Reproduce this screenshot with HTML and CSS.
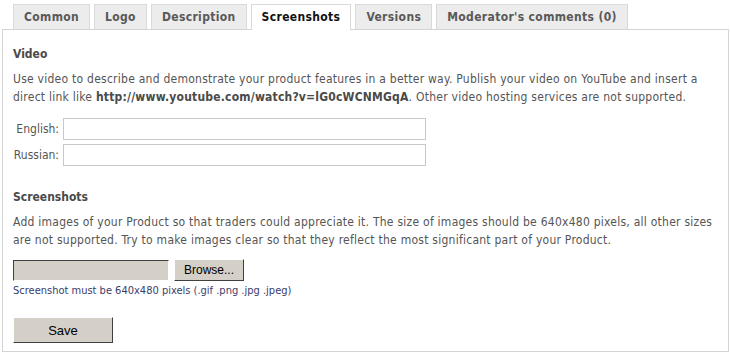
FILE: index.html
```html
<!DOCTYPE html>
<html lang="en">
<head>
    <meta charset="UTF-8">
    <title>Product - Screenshots</title>
    <link rel="stylesheet" href="styles.css">
</head>
<body>
    <div class="page">
        <ul class="tabs">
            <li class="tab">Common</li>
            <li class="tab">Logo</li>
            <li class="tab">Description</li>
            <li class="tab active">Screenshots</li>
            <li class="tab">Versions</li>
            <li class="tab">Moderator's comments (0)</li>
        </ul>
        <div class="panel">
            <h3>Video</h3>
            <p>Use video to describe and demonstrate your product features in a better way. Publish your video on YouTube and insert a direct link like <b>http://www.youtube.com/watch?v=lG0cWCNMGqA</b>. Other video hosting services are not supported.</p>
            <div class="fields">
                <label for="video-en">English:</label>
                <input type="text" id="video-en">
                <label for="video-ru">Russian:</label>
                <input type="text" id="video-ru">
            </div>

            <h3 class="section">Screenshots</h3>
            <p>Add images of your Product so that traders could appreciate it. The size of images should be 640x480 pixels, all other sizes are not supported. Try to make images clear so that they reflect the most significant part of your Product.</p>
            <div class="upload">
                <input type="text" class="file-path" readonly>
                <button type="button" class="btn browse">Browse...</button>
            </div>
            <div class="hint">Screenshot must be 640x480 pixels (.gif .png .jpg .jpeg)</div>

            <button type="button" class="btn save">Save</button>
        </div>
    </div>
</body>
</html>
```

FILE: styles.css
```css
body {
    margin: 0;
    padding: 0;
    background-color: #fff;
    font-family: "DejaVu Sans Condensed", "DejaVu Sans", sans-serif;
    font-size: 12px;
    color: #555;
}

.page {
    padding: 4px 2px 0 2px;
    width: 727px;
}

.tabs {
    list-style: none;
    margin: 0 0 -1px 11px;
    padding: 0;
    display: flex;
    gap: 4px;
}

.tab {
    height: 24px;
    line-height: 24px;
    padding: 0 10px;
    background-color: #ececec;
    border: 1px solid #dadada;
    border-bottom: none;
    font-weight: bold;
    letter-spacing: 0.35px;
    color: #595959;
}

.tab.active {
    background-color: #fff;
    color: #111;
    height: 25px;
    position: relative;
}

.panel {
    border: 1px solid #d4d4d4;
    padding: 16px 10px 8px 10px;
}

h3 {
    margin: 0 0 8px 0;
    font-size: 12px;
    line-height: 16px;
    color: #4a4a4a;
}

h3.section {
    margin-top: 23px;
}

p {
    margin: 0;
    line-height: 18px;
    letter-spacing: 0.25px;
}

p b {
    color: #4a4a4a;
    letter-spacing: 0.2px;
}

.fields {
    display: grid;
    grid-template-columns: 46px 363px;
    column-gap: 4px;
    row-gap: 4px;
    align-items: center;
    margin: 12px 0 0 0;
}

.fields label {
    text-align: right;
}

.fields input {
    height: 22px;
    box-sizing: border-box;
    border: 1px solid #c8c8c8;
    padding: 1px 3px;
    font-family: inherit;
}

.upload {
    display: flex;
    align-items: center;
    gap: 5px;
    margin-top: 10px;
}

.file-path {
    width: 156px;
    height: 21px;
    box-sizing: border-box;
    background-color: #d4d0c8;
    border: 1px solid;
    border-color: #404040 #fff #fff #404040;
    padding: 0;
}

.btn {
    background-color: #d4d0c8;
    border: 1px solid;
    border-color: #fff #404040 #404040 #fff;
    font-family: "Liberation Sans", Arial, sans-serif;
    color: #000;
    padding: 0;
    box-sizing: border-box;
}

.browse {
    width: 70px;
    height: 22px;
    font-size: 12px;
}

.hint {
    margin-top: 3px;
    font-size: 11px;
    line-height: 14px;
    color: #3c3c6c;
}

.save {
    display: block;
    margin-top: 19px;
    width: 100px;
    height: 26px;
    font-size: 13px;
}
```
